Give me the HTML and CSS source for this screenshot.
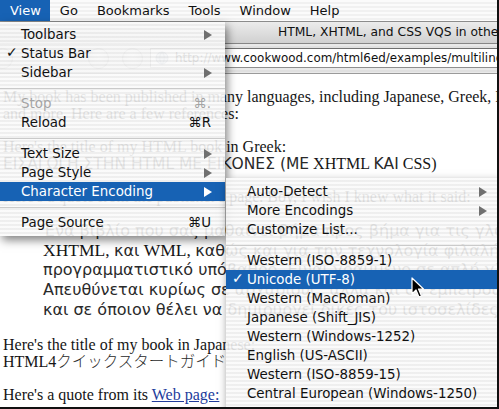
FILE: index.html
```html
<!DOCTYPE html>
<html>
<head>
<meta charset="utf-8">
<link rel="stylesheet" href="styles.css">
</head>
<body>
<div class="screen">
  <div class="menubar">
    <span class="mb-item active">View</span>
    <span class="mb-item">Go</span>
    <span class="mb-item">Bookmarks</span>
    <span class="mb-item">Tools</span>
    <span class="mb-item">Window</span>
    <span class="mb-item">Help</span>
  </div>
  <div class="window">
    <div class="titlebar"><span class="title">HTML, XHTML, and CSS VQS in other languages</span></div>
    <div class="toolbar">
      <span class="navbtn b1"></span>
      <span class="navbtn b2"></span>
      <span class="navbtn b3"></span>
      <div class="urlfield">
        <svg class="globe" width="14" height="14" viewBox="0 0 14 14"><circle cx="7" cy="7" r="6" fill="#cfd8e4" stroke="#8a98aa"/><path d="M1 7h12M7 1c-3 3-3 9 0 12M7 1c3 3 3 9 0 12" stroke="#8a98aa" fill="none"/></svg>
        <span class="url">http://www.cookwood.com/html6ed/examples/multilingual.html</span>
      </div>
    </div>
    <div class="content">
      <p>My book has been published in many languages, including Japanese, Greek, Italian, Spanish<br>and more. Here are a few references:</p>
      <p>Here's the title of my HTML book in Greek:<br><span class="gr">ΕΙΣΑΓΩΓΗ ΣΤΗΝ HTML ΜΕ ΕΙΚΟΝΕΣ (ΜΕ</span> XHTML <span class="gr">ΚΑΙ</span> CSS)</p>
      <p>Here's a quote from the publisher's page. Boy, I wish I knew what it said:</p>
      <blockquote>
        <span class="gr">Ένα βιβλίο που σας μαθαίνει βήμα προς βήμα για τις γλώσσες</span> HTML,<br>
        XHTML, <span class="gr">και</span> WML, <span class="gr">καθώς και για την τεχνολογία φιλαλήθων CSS,</span><br>
        <span class="gr">προγραμματιστικό υπόβαθρο. Είναι γραμμένο σε απλή γλώσσα</span><br>
        <span class="gr">Απευθύνεται κυρίως σε αρχάριους, αλλά και σε έμπειρους</span><br>
        <span class="gr">και σε όποιον θέλει να δημιουργεί δικές του ιστοσελίδες.</span>
      </blockquote>
      <p>Here's the title of my book in Japanese:<br>HTML4<span class="ja">クイックスタートガイド</span></p>
      <p>Here's a quote from its <a href="#" class="link">Web page:</a></p>
    </div>
  </div>

  <div class="menu view-menu">
    <div class="mi"><span>Toolbars</span><span class="arrow"></span></div>
    <div class="mi"><span class="check">✓</span><span>Status Bar</span></div>
    <div class="mi"><span>Sidebar</span><span class="arrow"></span></div>
    <div class="sep"></div>
    <div class="mi dis"><span>Stop</span><span class="sc">⌘.</span></div>
    <div class="mi"><span>Reload</span><span class="sc">⌘R</span></div>
    <div class="sep"></div>
    <div class="mi"><span>Text Size</span><span class="arrow"></span></div>
    <div class="mi"><span>Page Style</span><span class="arrow"></span></div>
    <div class="mi hl"><span>Character Encoding</span><span class="arrow"></span></div>
    <div class="sep"></div>
    <div class="mi"><span>Page Source</span><span class="sc">⌘U</span></div>
  </div>

  <div class="menu sub-menu">
    <div class="mi"><span>Auto-Detect</span><span class="arrow"></span></div>
    <div class="mi"><span>More Encodings</span><span class="arrow"></span></div>
    <div class="mi"><span>Customize List...</span></div>
    <div class="sep"></div>
    <div class="mi"><span>Western (ISO-8859-1)</span></div>
    <div class="mi hl"><span class="check">✓</span><span>Unicode (UTF-8)</span></div>
    <div class="mi"><span>Western (MacRoman)</span></div>
    <div class="mi"><span>Japanese (Shift_JIS)</span></div>
    <div class="mi"><span>Western (Windows-1252)</span></div>
    <div class="mi"><span>English (US-ASCII)</span></div>
    <div class="mi"><span>Western (ISO-8859-15)</span></div>
    <div class="mi"><span>Central European (Windows-1250)</span></div>
  </div>

  <svg class="cursor" width="14" height="22" viewBox="0 0 14 22"><path d="M1 1 L1 17 L5 13 L8 20 L10.5 19 L7.5 12 L12.5 12 Z" fill="#000" stroke="#fff" stroke-width="1.2" stroke-linejoin="round"/></svg>
</div>
</body>
</html>
```

FILE: styles.css
```css
* { box-sizing: border-box; }
body { margin: 0; background: #fff; }

.screen {
  position: relative;
  width: 499px;
  height: 409px;
  overflow: hidden;
  border-right: 2px solid #111;
  border-bottom: 2px solid #111;
  font-family: "DejaVu Sans", sans-serif;
  background: #fff;
}

/* menu bar */
.menubar {
  display: flex;
  height: 22px;
  border-bottom: 1px solid #8c8c8c;
  background: repeating-linear-gradient(to bottom, #fbfbfb 0 2px, #f1f1f1 2px 4px);
  font-size: 13px;
}
.mb-item { padding: 0 9px 0 10px; line-height: 21px; color: #111; }
.mb-item.active { background: #1762b4; color: #fff; }

/* window chrome */
.titlebar {
  height: 22px;
  border-bottom: 1px solid #868686;
  background: linear-gradient(to bottom, #ececec, #d0d0d0);
  font-size: 12.3px;
  line-height: 21px;
  padding-left: 278px;
  white-space: nowrap;
  color: #111;
}
.toolbar {
  position: relative;
  height: 30px;
  border-bottom: 1px solid #9a9a9a;
  background: repeating-linear-gradient(to bottom, #e9e9e9 0 2px, #e0e0e0 2px 4px);
  padding: 4px 0 0 150px;
}
.navbtn {
  position: absolute;
  top: 4px;
  width: 21px;
  height: 21px;
  border-radius: 50%;
  border: 1px solid #999;
  background: radial-gradient(circle at 50% 35%, #fafafa, #c4c4c4);
}
.b1 { left: -8px; }
.b2 { left: 88px; }
.b3 { left: 122px; }
.urlfield {
  display: flex;
  align-items: center;
  gap: 6px;
  width: 420px;
  height: 20px;
  background: #fff;
  border: 1px solid #8e8e8e;
  border-top-color: #6f6f6f;
  padding-left: 4px;
}
.url { font-size: 11.9px; color: #111; white-space: nowrap; }

/* page content */
.content {
  padding: 14px 0 0 3px;
  font-family: "Liberation Serif", serif;
  font-size: 16px;
  line-height: 17px;
  color: #151515;
  white-space: nowrap;
}
.content p { margin: 0 0 16px; }
.content blockquote { margin: 0 0 16px 40px; font-size: 17.5px; line-height: 19.7px; }
.gr {
  font-family: "DejaVu Sans", sans-serif;
  font-size: 15.5px;
  color: #2a2a2a;
  line-height: 0;
}
blockquote .gr { font-size: 16px; }
.ja {
  font-family: "Noto Sans CJK JP", sans-serif;
  font-weight: 300;
  font-size: 15.5px;
  color: #2a2a2a;
  line-height: 0;
}
.link { color: #223c9c; text-decoration: underline; }

/* menus */
.menu {
  position: absolute;
  font-size: 13.4px;
  color: #111;
  background: repeating-linear-gradient(to bottom, rgba(250,250,250,.9) 0 2px, rgba(237,237,237,.9) 2px 4px);
  box-shadow: 2px 4px 9px rgba(0,0,0,.5);
}
.view-menu { left: 0; top: 22px; width: 225px; padding: 3px 0 4px; }
.sub-menu { left: 226px; top: 178px; width: 274px; padding: 4px 0 6px; }
.mi {
  position: relative;
  display: flex;
  align-items: center;
  height: 19px;
  padding: 0 13px 0 21px;
  white-space: nowrap;
}
.mi .check { position: absolute; left: 6px; top: 0; font-weight: bold; font-size: 14px; }
.mi .sc { margin-left: auto; padding-right: 1px; }
.mi .arrow {
  margin-left: auto;
  width: 0;
  height: 0;
  border-left: 8px solid #707070;
  border-top: 5px solid transparent;
  border-bottom: 5px solid transparent;
}
.mi.hl { background: #1762b4; color: #fff; }
.mi.hl .arrow { border-left-color: #fff; }
.mi.dis { color: #a4a4a4; }
.sep { height: 12px; display: flex; align-items: center; }
.sep::before { content: ""; flex: 1; height: 1px; background: #cacaca; }

.cursor { position: absolute; left: 411px; top: 277px; }
```
